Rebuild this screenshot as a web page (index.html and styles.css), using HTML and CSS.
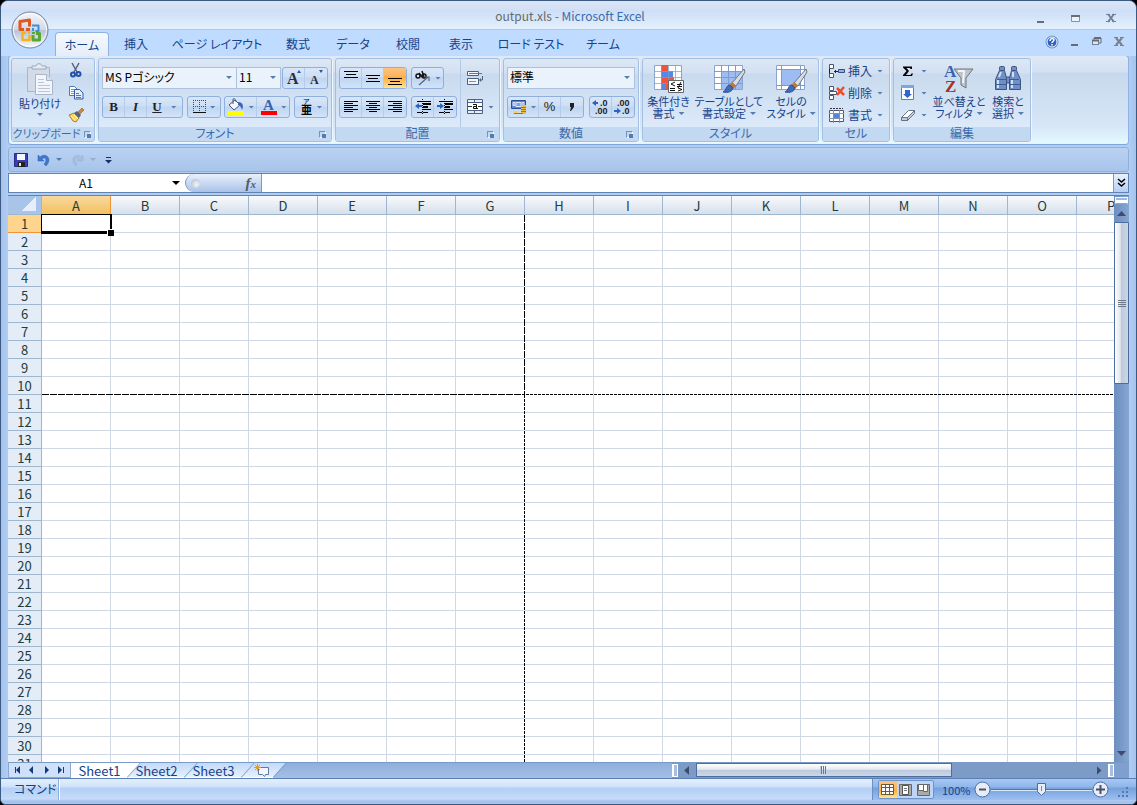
FILE: index.html
```html
<!DOCTYPE html>
<html lang="ja">
<head>
<meta charset="utf-8">
<title>output.xls - Microsoft Excel</title>
<link rel="stylesheet" href="styles.css">
</head>
<body>
<div class="window">
  <header class="top">
    <button class="office" aria-label="Office">
      <svg width="38" height="38" viewBox="0 0 38 38">
        <defs>
          <linearGradient id="orb" x1="0" y1="0" x2="0" y2="1"><stop offset="0" stop-color="#f4f6fa"/><stop offset=".48" stop-color="#d3dae6"/><stop offset=".52" stop-color="#b8c3d6"/><stop offset="1" stop-color="#f8fcff"/></linearGradient>
        </defs>
        <circle cx="19" cy="19" r="18" fill="url(#orb)" stroke="#7485a0"/>
        <circle cx="19" cy="19" r="16.5" fill="none" stroke="#fff" stroke-opacity=".8"/>
        <g fill="none" stroke-linejoin="round">
          <path d="M13 18.500H9V10.500L18.500 9v6.500" stroke="#e2571b" stroke-width="3"/>
          <path d="M21 14.500h6.500v5.500h-3" stroke="#3f8fd8" stroke-width="2"/>
          <path d="M15 22h-3.500v7h7v-5" stroke="#f5b21c" stroke-width="2.500"/>
          <path d="M22 24v5h6.500v-6.500H25" stroke="#5aa632" stroke-width="3"/>
        </g>
        <path d="M15 17h4v3h-4z" fill="#e2571b"/><path d="M21 17h2v3h-2z" fill="#3f8fd8"/><path d="M17 21h2v2h-2z" fill="#f5b21c"/><path d="M21 21h3v2h-3z" fill="#5aa632"/>
      </svg>
    </button>
    <div class="titlebar">
      <h1 class="caption"><span class="doc">output.xls</span> - Microsoft Excel</h1>
      <div class="winbtns">
        <button aria-label="最小化"><svg width="12" height="12"><rect x="2" y="9" width="7" height="2" fill="#6b6b76"/></svg></button>
        <button aria-label="最大化"><svg width="12" height="12"><path d="M1.500 4v5.500h8V4" fill="#eaf2fc" stroke="#7b93b8"/><rect x="1" y="3" width="9" height="2" fill="#6b6b76"/></svg></button>
        <button aria-label="閉じる"><svg width="12" height="12"><path d="M3 2l6 8M9 2l-6 8" stroke="#71809c" stroke-width="2"/><path d="M1 2.500h4M7 2.500h4M1 9.500h4M7 9.500h4" stroke="#71809c"/></svg></button>
      </div>
    </div>
    <nav class="tabs">
      <button class="tab t54 on">ホーム</button>
      <button class="tab t54">挿入</button>
      <button class="tab t108">ページ レイアウト</button>
      <button class="tab t54">数式</button>
      <button class="tab t56">データ</button>
      <button class="tab t54">校閲</button>
      <button class="tab t52">表示</button>
      <button class="tab t88">ロード テスト</button>
      <button class="tab t56">チーム</button>
      <div class="docbtns">
        <button aria-label="ヘルプ"><svg width="14" height="14"><circle cx="7" cy="7" r="6" fill="#2c62c8" stroke="#6f93c9"/><circle cx="7" cy="7" r="5" fill="none" stroke="#fff"/><path d="M5 6c0-3 4-3 4-1 0 1.500-2 1.500-2 3M7 9v1.500" stroke="#fff" stroke-width="1.500" fill="none"/></svg></button>
        <button aria-label="ブックを最小化"><svg width="12" height="12"><rect x="2" y="8" width="7" height="2" fill="#6b6b76"/></svg></button>
        <button aria-label="元に戻す (縮小)"><svg width="12" height="12"><path d="M3 3.500V2h7v5H8" fill="none" stroke="#6b6b76"/><rect x="1.500" y="4.500" width="6" height="4" fill="#dce9fa" stroke="#6f7f9c"/><path d="M1 4.500h7M3 2h7" stroke="#6b6b76" stroke-width="2"/></svg></button>
        <button aria-label="ブックを閉じる"><svg width="12" height="12"><path d="M3 2l6 7M9 2l-6 7" stroke="#7a7f8c" stroke-width="2"/><path d="M1 1.500h4M7 1.500h4M1 9.500h4M7 9.500h4" stroke="#7a7f8c"/></svg></button>
      </div>
    </nav>
  </header>

  <main class="body">
    <section class="ribbon">
      <div class="group g-clip">
        <div class="content clip">
          <button class="big paste"><svg width="32" height="32" viewBox="0 0 32 32"><path d="M3.500 4.500h22v24h-22z" fill="#d3dbe8" stroke="#a9b6ca"/><path d="M8 6V3h4c0-3 6-3 6 0h4v3z" fill="#e6ebf3" stroke="#9aa8be"/><path d="M11.500 11.500h11l6 6v14h-17z" fill="#f2f6fc" stroke="#a9b6ca"/><path d="M22.500 11.500v6h6" fill="#d9e2ef" stroke="#a9b6ca"/><path d="M14 16.500h6M14 19.500h6M14 22.500h12M14 25.500h12M14 28.500h12" stroke="#b9c6da"/></svg><span>貼り付け</span><i class="caret"></i></button>
          <div class="stack">
            <button aria-label="切り取り"><svg width="16" height="16"><path d="M4 0l5 9M11 0L6 9" stroke="#54647e" stroke-width="1.500"/><circle cx="5" cy="11.500" r="2" fill="none" stroke="#2350a8" stroke-width="2"/><circle cx="10.500" cy="11" r="2" fill="none" stroke="#2350a8" stroke-width="2"/></svg></button>
            <button aria-label="コピー"><svg width="16" height="16"><path d="M1.500 1.500h5l3 3v6h-8z" fill="#fff" stroke="#4d7ac0"/><path d="M3 4.500h3M3 6.500h3M3 8.500h3" stroke="#6f98d8"/><path d="M6.500 4.500h5l3.500 3.500v6h-8.500z" fill="#e4eefb" stroke="#2f5da8"/><path d="M8 8.500h3M8 10.500h5M8 12.500h5" stroke="#4d7ac0"/></svg></button>
            <button aria-label="書式のコピー/貼り付け"><svg width="16" height="16"><path d="M1 8l5-2 5 5-3 4-3-1z" fill="#f5d66b" stroke="#a98324"/><path d="M3 9l4 4M6 8l4 4" stroke="#fff3b8"/><path d="M6 6l3-2 4 4-2 3z" fill="#53628a"/><path d="M10 5l4-4 2 2-4 4z" fill="#c98a3a" stroke="#8a5a1e" stroke-width=".6"/></svg></button>
          </div>
        </div>
        <h2>クリップボード<i class="dlg"></i></h2>
      </div>

      <div class="group g-font">
        <div class="content rows">
          <div class="row">
            <div class="joined">
              <label class="combo w134"><select aria-label="フォント"><option>MS Pゴシック</option></select><i class="caret"></i></label>
              <label class="combo w44"><select aria-label="フォント サイズ"><option>11</option></select><i class="caret"></i></label>
            </div>
            <div class="seg">
              <button aria-label="フォント サイズの拡大" class="w22"><svg width="18" height="18"><text x="2" y="15" class="serif" font-size="16">A</text><path d="M12 4l2-3 2 3z" fill="#2c559c"/></svg></button>
              <button aria-label="フォント サイズの縮小" class="w22"><svg width="18" height="18"><text x="3" y="15" class="serif" font-size="12">A</text><path d="M12 1l2 3 2-3z" fill="#2c559c"/></svg></button>
            </div>
          </div>
          <div class="row">
            <div class="seg"><button class="w22 fmt"><b>B</b></button><button class="w22 fmt"><em>I</em></button><button class="w36 fmt"><u>U</u><i class="caret"></i></button></div>
            <div class="seg"><button class="w34" aria-label="罫線"><svg width="15" height="16"><path d="M1 1.500h13M1 7.500h13M1.500 1v12M7.500 1v12M13.500 1v12" stroke="#444a5c" stroke-dasharray="1 1"/><path d="M1 13.500h13" stroke="#111"/></svg><i class="caret"></i></button></div>
            <div class="seg"><button class="w34" aria-label="塗りつぶしの色"><svg width="18" height="18"><path d="M2 7l6-5 5 5-6 5z" fill="#f3f6fb" stroke="#4b5a74"/><path d="M6 6V1c2-1 3 1 3 3" fill="none" stroke="#4b5a74"/><path d="M11 4c5 0 6 4 4 8-1-3-2-5-4-5z" fill="#3a68b8"/><rect x="1" y="13" width="16" height="4" fill="#ff0"/></svg><i class="caret"></i></button><button class="w34" aria-label="フォントの色"><svg width="18" height="18"><text x="3" y="12" class="serif blue" font-size="15">A</text><rect x="1" y="13" width="16" height="4" fill="red"/></svg><i class="caret"></i></button></div>
            <div class="seg"><button class="w34" aria-label="ふりがなの表示/非表示"><svg width="14" height="18" class="ruby"><text x="4" y="6" font-size="7">ア</text><text x="2" y="16" font-size="11" font-weight="700">亜</text></svg><i class="caret"></i></button></div>
          </div>
        </div>
        <h2>フォント<i class="dlg"></i></h2>
      </div>

      <div class="group g-align">
        <div class="content align">
          <div class="rows">
            <div class="row">
              <div class="seg">
                <button class="w23" aria-label="上揃え"><svg width="16" height="16"><path d="M1 1.500h14M3 4.500h10M1 7.500h14" stroke="#000"/></svg></button>
                <button class="w23" aria-label="上下中央揃え"><svg width="16" height="16"><path d="M1 5.500h14M3 8.500h10M1 11.500h14" stroke="#000"/></svg></button>
                <button class="w23 lit" aria-label="下揃え"><svg width="16" height="16"><path d="M1 8.500h14M3 11.500h10M1 14.500h14" stroke="#000"/></svg></button>
              </div>
              <div class="seg"><button class="w32" aria-label="方向"><svg width="18" height="16"><g fill="none" stroke="#111" stroke-width="1.500"><circle cx="4" cy="6" r="2"/><path d="M5 3l3 4M8 1l2 6"/><circle cx="10" cy="6" r="2"/></g><path d="M5 15l9-8M11 7h4v4" fill="none" stroke="#5a6474" stroke-width="1.200"/></svg><i class="caret"></i></button></div>
            </div>
            <div class="row">
              <div class="seg">
                <button class="w23" aria-label="左揃え"><svg width="16" height="16"><path d="M1 2.500h14M1 4.500h9M1 6.500h14M1 8.500h9M1 10.500h14M1 12.500h9" stroke="#000"/></svg></button>
                <button class="w23" aria-label="中央揃え"><svg width="16" height="16"><path d="M1 2.500h14M4 4.500h8M1 6.500h14M4 8.500h8M1 10.500h14M4 12.500h8" stroke="#000"/></svg></button>
                <button class="w23" aria-label="右揃え"><svg width="16" height="16"><path d="M1 2.500h14M6 4.500h9M1 6.500h14M6 8.500h9M1 10.500h14M6 12.500h9" stroke="#000"/></svg></button>
              </div>
              <div class="seg">
                <button class="w22" aria-label="インデントを減らす"><svg width="16" height="16"><path d="M2 2.500h14M8 10.500h8M2 13.500h5M8 13.500h5" stroke="#000"/><path d="M8 5h8M8 8h5" stroke="#000" stroke-width="2"/><path d="M0 7l4-3v2h3v2H4v2z" fill="#2d63c4"/><path d="M7.500 0v16" stroke="#000" stroke-dasharray="1 1"/></svg></button>
                <button class="w22" aria-label="インデントを増やす"><svg width="16" height="16"><path d="M2 2.500h14M8 10.500h8M2 13.500h5M8 13.500h5" stroke="#000"/><path d="M8 5h8M8 8h5" stroke="#000" stroke-width="2"/><path d="M7 7L3 4v2H0v2h3v2z" fill="#2d63c4"/><path d="M7.500 0v16" stroke="#000" stroke-dasharray="1 1"/></svg></button>
              </div>
            </div>
          </div>
          <div class="rows side">
            <button class="flat" aria-label="折り返して全体を表示する"><svg width="17" height="16"><path d="M.5 1.500h11v4H.5z" fill="#f4f7fc" stroke="#4d6180"/><path d="M2 3.500h13" stroke="#a86a28"/><path d="M.5 8.500h11v6H.5z" fill="#f4f7fc" stroke="#4d6180"/><path d="M2 11.500h7" stroke="#c08048"/><path d="M15.500 6v4H13" stroke="#4d6180" fill="none"/><path d="M12 10l2-2v4z" fill="#4d6180"/></svg></button>
            <button class="flat" aria-label="セルを結合して中央揃え"><svg width="17" height="16"><path d="M.5.500h15v14H.5z" fill="#e6eef9" stroke="#4d6180"/><path d="M.5 3.500h15M.5 11.500h15M7.500 0v4M7.500 12v3" stroke="#4d6180"/><path d="M1 4h14v7H1z" fill="#fff"/><path d="M1 7.500h4M11 7.500h4" stroke="#333"/><path d="M6 5.500h3.500V10M9 7.500H6.500V9.500H11" stroke="#111" fill="none"/></svg><i class="caret"></i></button>
          </div>
        </div>
        <h2>配置<i class="dlg"></i></h2>
      </div>

      <div class="group g-num">
        <div class="content rows">
          <div class="row"><label class="combo fill"><select aria-label="表示形式"><option>標準</option></select><i class="caret"></i></label></div>
          <div class="row">
            <div class="seg"><button class="w32" aria-label="通貨表示形式"><svg width="18" height="16"><path d="M1.500 1.500h14v8h-14z" fill="#5f86cf" stroke="#2a4f96"/><path d="M6 3.500h5v4H6zM3 3.500h2v3H3zM12 3.500h2v3h-2z" fill="#7fa3e0" stroke="#dbe7fa"/><path d="M11 6h5v9h-5z" fill="#f0bd3e"/><path d="M3 12h6v3H3z" fill="#f6d169"/><path d="M11 8.500h5M11 10.500h5M11 12.500h5M4 14.500h9" stroke="#a7731b"/></svg><i class="caret"></i></button><button class="w23 sans">%</button><button class="w23 comma" aria-label="桁区切りスタイル"><svg width="8" height="10"><path d="M2 1h4v4L3 9H2l1-4H2z" fill="#222"/></svg></button></div>
            <div class="seg"><button class="w22" aria-label="小数点以下の表示桁数を増やす"><svg width="18" height="16" class="dec"><text x="8" y="7">.0</text><text x="3" y="15">.00</text><path d="M0 4l4-3v2h2v2H4v2z" fill="#2d63c4"/></svg></button><button class="w22" aria-label="小数点以下の表示桁数を減らす"><svg width="18" height="16" class="dec"><text x="3" y="7">.00</text><text x="8" y="15">.0</text><path d="M7 12L3 9v2H0v2h3v2z" fill="#2d63c4"/></svg></button></div>
          </div>
        </div>
        <h2>数値<i class="dlg"></i></h2>
      </div>

      <div class="group g-style">
        <div class="content">
          <button class="big w50"><svg width="32" height="32" viewBox="0 0 32 32"><path d="M1.500 2.500h27v24h-27z" fill="#fff" stroke="#8ba6cd"/><path d="M8 2h7v25H8z" fill="#f0533c"/><path d="M8 8h12v6H8z" fill="#5688e6"/><path d="M15 14h6v7h-6z" fill="#f0533c"/><path d="M8 21h5v5H8z" fill="#5688e6"/><path d="M1 8.500h28M1 14.500h28M1 20.500h28M8.500 2v25M15.500 2v25M22.500 2v25" stroke="#7d9ccc" stroke-opacity=".7"/><path d="M15.500 17.500h15v12h-15z" fill="#fff" stroke="#666"/><path d="M22 19l-4 2 4 2M24 21.500h5M24 23.500h5M17 25.500h5M17 27.500h5M28 19l-3 6M25 25l4 1.500-4 1.500" fill="none" stroke="#111"/></svg><span>条件付き<br>書式<i class="caret"></i></span></button>
          <button class="big w70"><svg width="32" height="32" viewBox="0 0 32 32"><path d="M1.500 2.500h28v24h-28z" fill="#fff" stroke="#8ba6cd"/><path d="M8 8h21v18H8z" fill="#9dbdf2"/><path d="M1 8.500h29M1 14.500h29M1 20.500h29M8.500 2v25M15.500 2v25M22.500 2v25" stroke="#7d9ccc"/><path d="M31 6L19 20l4 3 9-14z" fill="#d9dce2" stroke="#6c7482"/><path d="M19 19l4 4-3 3-4-3z" fill="#b77a38"/><path d="M17 22c-4 0-3 5-7 7 5 1 9 0 10-4z" fill="#3f6cb8" stroke="#2a4f91"/></svg><span>テーブルとして<br>書式設定<i class="caret"></i></span></button>
          <button class="big w54"><svg width="32" height="32" viewBox="0 0 32 32"><path d="M1.500 2.500h28v24h-28z" fill="#fff" stroke="#8ba6cd"/><path d="M6 7h19v15H6z" fill="#9dbdf2"/><path d="M1 6.500h29M1 22.500h29M6.500 2v25M25.500 2v25" stroke="#7d9ccc"/><path d="M31 6L19 20l4 3 9-14z" fill="#d9dce2" stroke="#6c7482"/><path d="M19 19l4 4-3 3-4-3z" fill="#b77a38"/><path d="M17 22c-4 0-3 5-7 7 5 1 9 0 10-4z" fill="#3f6cb8" stroke="#2a4f91"/></svg><span>セルの<br>スタイル<i class="caret"></i></span></button>
        </div>
        <h2>スタイル</h2>
      </div>

      <div class="group g-cell">
        <div class="content stack wide">
          <button><svg width="17" height="16"><path d="M1.500 1.500h4v4h-4zM1.500 10.500h4v4h-4z" fill="#fff" stroke="#4a5670"/><path d="M1.500 5.500v5M6 8.500h4M7.500 7v3" stroke="#222"/><path d="M10.500 6.500h6v3h-6z" fill="#8fb0e8" stroke="#34507f"/></svg>挿入<i class="caret"></i></button>
          <button><svg width="17" height="16"><path d="M1.500 1.500h4v4h-4zM1.500 10.500h4v4h-4zM1.500 6.500h7v3h-7z" fill="#fff" stroke="#4a5670"/><path d="M9 3l7 7M16 2L9 10" stroke="#ee4a2c" stroke-width="2.500"/></svg>削除<i class="caret"></i></button>
          <button><svg width="17" height="16"><path d="M1.500 3.500h14v11h-14z" fill="#fff" stroke="#4a5670"/><path d="M1 6.500h15M1 11.500h15M5.500 3v13M11.500 3v13" stroke="#8594ae"/><path d="M6 7h5v4H6z" fill="#4f86e0"/><path d="M2 1.500h13" stroke="#333" stroke-dasharray="2 1"/></svg>書式<i class="caret"></i></button>
        </div>
        <h2>セル</h2>
      </div>

      <div class="group g-edit">
        <div class="content">
          <div class="stack wide">
            <button aria-label="合計"><svg width="16" height="16"><path d="M3 3.500h9v2.500h-1.500L10 5H6.500L9 8l-3 4h4.500l1-1.500H13L12 13H3v-1l3.500-4L3 4.500z" fill="#000"/></svg><i class="caret"></i></button>
            <button aria-label="フィル"><svg width="16" height="16"><path d="M1.500.500h12v14h-12z" fill="#fff" stroke="#5b7fb8"/><path d="M1 0h13v3H1z" fill="#7fa5e0"/><path d="M5 5h5v4h2l-4.500 4L3 9h2z" fill="#2f66cc"/></svg><i class="caret"></i></button>
            <button aria-label="クリア"><svg width="16" height="16"><path d="M1.500 10.500l7-7h6l-7 7z" fill="#fff" stroke="#6a7384"/><path d="M1.500 10.500h6v3h-6zM7.500 10.500l7-7v3l-7 7z" fill="#c3cddd" stroke="#6a7384"/></svg><i class="caret"></i></button>
          </div>
          <button class="big w56"><svg width="32" height="32" viewBox="0 0 32 32"><text x="1" y="14" class="serif blue" font-size="17">A</text><text x="2" y="29" class="serif red" font-size="17">Z</text><path d="M11 6h19L23 15v10l-5-3v-7z" fill="#bfc3ca" stroke="#6e7480"/><path d="M15 8h6l-1 12" fill="none" stroke="#f2f4f7" stroke-width="2"/></svg><span>並べ替えと<br>フィルタ<i class="caret"></i></span></button>
          <button class="big w42"><svg width="32" height="32" viewBox="0 0 32 32"><g fill="#6f90c6" stroke="#3c5684"><path d="M13 14h6v6h-6z"/><path d="M7.500 7.500h5l2 8v11h-11v-10zM24.500 7.500h-5l-2 8v11h11v-10z"/><rect x="7.500" y="3.500" width="5" height="4" rx="1"/><rect x="19.500" y="3.500" width="5" height="4" rx="1"/></g><path d="M6 17v8M20 17v8M9 9l-2 5M21 9v5" stroke="#cfdff5" stroke-width="2"/><path d="M4 21.500h10M18 21.500h10M5 16.500h9M18 16.500h9" stroke="#3f5d92"/></svg><span>検索と<br>選択<i class="caret"></i></span></button>
        </div>
        <h2>編集</h2>
      </div>
    </section>

    <section class="qat">
      <button aria-label="上書き保存"><svg width="14" height="14"><path d="M.5.500h13v13H.5z" fill="#3c3fb4" stroke="#2a2a88"/><path d="M3 1h8v6H3z" fill="#f2f6ff"/><path d="M4 9h7v5H4z" fill="#222"/><path d="M5 10h2v3H5z" fill="#dfe6f4"/></svg></button>
      <button aria-label="元に戻す"><svg width="14" height="14"><path d="M1 2v6h6L5 6c3-3 6 1 2 5l2 2C16 6 9-1 3 4z" fill="#3e78d0" stroke="#2e5fb0" stroke-width=".5"/></svg><i class="caret"></i></button>
      <button class="off" aria-label="やり直し"><svg width="14" height="14"><path d="M12 2v6H6l2-2C5 3 2 7 6 11l-1 2C-2 7 4-1 10 4z" fill="#a9bcd8" stroke="#8fa6c8" stroke-width=".5"/></svg><i class="caret"></i></button>
      <button aria-label="クイック アクセス ツール バーのカスタマイズ"><svg width="7" height="8"><path d="M1 1.500h5" stroke="#14306c"/><path d="M0 4h7L3.500 7.500z" fill="#14306c"/></svg></button>
    </section>

    <section class="fbar">
      <label class="namebox"><input aria-label="名前ボックス" value="A1"><i class="caret dark"></i></label>
      <div class="fx"><span class="knob"></span><button class="fxbtn" aria-label="関数の挿入"><em>f<small>x</small></em></button></div>
      <input class="formula" aria-label="数式バー">
      <button class="expand" aria-label="数式バーの展開"><svg width="9" height="10"><path d="M1 1l3.500 3L8 1M1 5l3.500 3L8 5" fill="none" stroke="#000" stroke-width="1.500"/></svg></button>
    </section>

    <section class="sheet">
      <div class="gridwrap">
        <table class="grid" id="grid"></table>
        <div class="cursor"></div>
        <div class="break-h"></div>
        <div class="break-v"></div>
      </div>
      <div class="vscroll">
        <span class="split"></span>
        <button aria-label="上へ"><i class="tri up"></i></button>
        <div class="vtrack"><div class="vthumb"><i class="grip"></i></div></div>
        <button aria-label="下へ"><i class="tri down"></i></button>
      </div>
    </section>

    <section class="bottom">
      <div class="sheettabs">
        <div class="nav">
          <button aria-label="先頭"><svg width="8" height="8"><path d="M1.500 1v6" stroke="#123a80"/><path d="M6 0v8L2 4z" fill="#123a80"/></svg></button>
          <button aria-label="前"><svg width="8" height="8"><path d="M5 0v8L1 4z" fill="#123a80"/></svg></button>
          <button aria-label="次"><svg width="8" height="8"><path d="M2 0v8l4-4z" fill="#123a80"/></svg></button>
          <button aria-label="末尾"><svg width="8" height="8"><path d="M1 0v8l4-4z" fill="#123a80"/><path d="M6.500 1v6" stroke="#123a80"/></svg></button>
        </div>
        <div class="tabset">
          <button class="st s1">Sheet1</button>
          <button class="st s2">Sheet2</button>
          <button class="st s3">Sheet3</button>
          <button class="st s4" aria-label="ワークシートの挿入"><svg width="16" height="13"><path d="M4.500 3.500h10v7h-3l-1 2-2-2h-4z" fill="#f3f6fc" stroke="#62799f"/><path d="M3.500 0v7M0 3.500h7M1 1l5 5M6 1L1 6" stroke="#e39a2c"/></svg></button>
        </div>
      </div>
      <div class="hscroll">
        <span class="hsplit"></span>
        <button aria-label="左へ"><i class="tri left"></i></button>
        <div class="htrack"><div class="hthumb"><i class="grip side"></i></div></div>
        <button aria-label="右へ"><i class="tri right"></i></button>
        <span class="hsplit"></span>
      </div>
      <div class="corner"></div>
    </section>
  </main>

  <footer class="status">
    <span class="mode">コマンド</span>
    <div class="zoombar">
      <div class="views">
        <button class="lit" aria-label="標準"><svg width="14" height="12"><path d="M.5.500h12v10H.5z" fill="#fff" stroke="#6b5a30"/><path d="M0 3.500h13M0 7.500h13M4.500 0v11M8.500 0v11" stroke="#6b5a30"/></svg></button>
        <button aria-label="ページ レイアウト"><svg width="14" height="12"><path d="M.5.500h12v11H.5z" fill="#aaa" stroke="#666"/><path d="M3.500 1.500h6v9h-6z" fill="#fff" stroke="#555"/><path d="M5 4.500h3M5 6.500h3" stroke="#777"/></svg></button>
        <button aria-label="改ページ プレビュー"><svg width="14" height="12"><path d="M.5.500h12v11H.5z" fill="#aaa" stroke="#666"/><path d="M1.500.500h5v6h-5zM6.500.500h4v7h-4z" fill="#fff" stroke="#666"/></svg></button>
      </div>
      <span class="pct">100%</span>
      <button class="round" aria-label="縮小"><svg width="17" height="17"><circle cx="8.500" cy="8.500" r="7.500" fill="#e6edf8" stroke="#4f6c9e"/><path d="M5 8.500h7" stroke="#47536b" stroke-width="2"/></svg></button>
      <input class="zoom" type="range" min="0" max="200" value="100" aria-label="ズーム">
      <button class="round" aria-label="拡大"><svg width="17" height="17"><circle cx="8.500" cy="8.500" r="7.500" fill="#e6edf8" stroke="#4f6c9e"/><path d="M4 8.500h9M8.500 4v9" stroke="#47536b" stroke-width="2"/></svg></button>
      <svg class="sizer" width="12" height="12"><path d="M8 0h2v2H8zM4 4h2v2H4zM8 4h2v2H8zM0 8h2v2H0zM4 8h2v2H4zM8 8h2v2H8z" fill="#5677b0"/></svg>
    </div>
  </footer>
</div>
<script src="script.js"></script>
</body>
</html>
```
FILE: script.js
```js
const columns = "ABCDEFGHIJKLMNOP".split("");
const rowCount = 31;
const grid = document.getElementById("grid");

const head = grid.createTHead().insertRow();
const corner = document.createElement("th");
corner.className = "all";
head.append(corner);
for (const name of columns) {
  const th = document.createElement("th");
  th.scope = "col";
  th.textContent = name;
  if (name === "A") th.className = "sel";
  head.append(th);
}

const body = grid.createTBody();
for (let r = 1; r <= rowCount; r++) {
  const row = body.insertRow();
  const th = document.createElement("th");
  th.scope = "row";
  th.textContent = r;
  if (r === 1) th.className = "sel";
  row.append(th);
  for (let c = 0; c < columns.length; c++) row.insertCell();
}
```
FILE: styles.css
```css
* { box-sizing: border-box; }
html, body { height: 100%; }
body {
  margin: 0;
  background: #000;
  font: 12px/14px "Noto Sans CJK JP", sans-serif;
  font-feature-settings: "palt";
  color: #15428b;
  overflow: hidden;
}
button, input, select { font: inherit; font-feature-settings: inherit; color: inherit; }
button { margin: 0; padding: 0; border: 0; background: none; display: flex; align-items: center; justify-content: center; white-space: nowrap; }
h1, h2 { margin: 0; font: inherit; }
svg { display: block; flex: none; overflow: visible; }

.window {
  height: 100vh;
  display: flex;
  flex-direction: column;
  border: 1px solid #3b5a82;
  border-radius: 8px 8px 6px 6px;
  background: #b0cbf1;
  overflow: hidden;
}

/* title and tabs */
.top { position: relative; flex: none; }
.office { position: absolute; left: 10px; top: 10px; z-index: 2; border-radius: 50%; }
.titlebar {
  height: 29px;
  display: flex;
  align-items: center;
  border-bottom: 1px solid #a9c9f2;
  background: linear-gradient(#dbe5f8 0, #d5e0f5 8px, #cbdff7 9px, #e4effd 28px);
}
.caption { flex: 1; text-align: center; color: #3e6aaa; padding: 2px 0 0 104px; }
.doc { color: #696969; }
.winbtns { display: flex; gap: 23px; padding-right: 19px; padding-top: 6px; }
.tabs { display: flex; height: 26px; padding: 2px 4px 0 54px; background: #bfdbff; }
.tab { height: 24px; }
.tab.on { border: 1px solid #8db2e3; border-bottom: 0; border-radius: 4px 4px 0 0; background: linear-gradient(#f6faff, #e4edf8); }
.t52 { width: 52px; } .t54 { width: 54px; } .t56 { width: 56px; } .t88 { width: 88px; } .t108 { width: 108px; }
.docbtns { display: flex; margin-left: auto; gap: 10px; padding-right: 7px; align-items: center; height: 20px; }

.body { flex: 1; min-height: 0; display: flex; flex-direction: column; padding: 0 7px; background: linear-gradient(90deg, #a5c3ee 0, #b2cdf2 7px, #b2cdf2 calc(100% - 7px), #a5c3ee 100%); }

/* ribbon */
.ribbon {
  flex: none;
  display: flex;
  gap: 3px;
  margin-top: -1px;
  padding: 2px;
  border: 1px solid #8db2e3;
  border-bottom-color: #7ea6d6;
  border-radius: 4px;
  background: linear-gradient(#dfe9f6 0, #d3e1f2 16px, #c8d9ed 17px, #d6e6f7 70px, #e2f8ff 86px);
}
.group {
  flex: none;
  height: 84px;
  display: flex;
  flex-direction: column;
  border: 1px solid #a3c0e2;
  border-radius: 3px;
  box-shadow: 1px 1px 0 #edf5fd;
  background: linear-gradient(#dde8f5 0, #d3e0f2 14px, #c9daee 15px, #dceafa 68px);
  overflow: hidden;
}
.g-clip { width: 84px; } .g-font { width: 234px; } .g-align { width: 165px; } .g-num { width: 136px; }
.g-style { width: 177px; } .g-cell { width: 68px; } .g-edit { width: 138px; }
.content { flex: 1; display: flex; min-height: 0; }
.group h2 { position: relative; height: 14px; flex: none; text-align: center; background: #c2d9f1; color: #3e6aaa; line-height: 12px; }
.group.g-clip h2 { padding-right: 13px; font-size: 11px; }
.dlg { position: absolute; right: 5px; top: 4px; width: 7px; height: 7px; border: 1px solid #7393bd; border-right-color: #fff; border-bottom-color: #fff; }
.g-clip .dlg { right: 3px; }
.dlg::after { content: ""; position: absolute; right: -1px; bottom: -1px; width: 4px; height: 4px; background: #587bab; }
.caret { display: inline-block; flex: none; width: 6px; height: 3px; background: #567db1; clip-path: polygon(0 0, 100% 0, 50% 100%); }
.rows { display: flex; flex-direction: column; gap: 7px; padding: 8px 3px 0; }
.row { display: flex; justify-content: space-between; height: 22px; }
.joined { display: flex; }
.combo { position: relative; display: flex; height: 22px; border: 1px solid #abc1de; background: #eaf2fb; }
.combo + .combo { border-left: 0; }
.combo select { width: 100%; border: 0; padding: 0 2px 2px; background: none; appearance: none; color: #000; }
.combo .caret { position: absolute; right: 4px; top: 8px; }
.fill { flex: 1; }
.w134 { width: 135px; } .w44 { width: 44px; }
.seg { display: flex; border: 1px solid #8fb0dd; border-radius: 3px; background: linear-gradient(#d9e6f7 0, #cddff5 9px, #bfd5f1 10px, #d2e3f8 100%); }
.seg button { gap: 3px; border-right: 1px solid #b5cbe9; }
.seg button:last-child { border-right: 0; }
.w22 { width: 22px; } .w23 { width: 22px; } .w32 { width: 31px; } .w34 { width: 32px; } .w36 { width: 35px; }
.w50 { width: 51px; } .w54 { width: 54px; } .w70 { width: 70px; } .w56 { width: 58px; } .w42 { width: 40px; }
.lit { background: linear-gradient(#fbc384 0, #fdb35d 8px, #ffa93c 9px, #ffe58e 100%); }
.fmt { font: bold 13px/16px "Liberation Serif", serif; color: #222; }
.fmt .caret { margin-left: 6px; }
.serif { font-family: "Liberation Serif", serif; font-weight: bold; fill: #2b2f38; }
.blue { fill: #3a63ae; }
.red { fill: #a43428; }
.ruby { fill: #000; }
.sans { font-family: "Liberation Sans", sans-serif; font-size: 13px; color: #222; }
.dec { font: bold 9px "Liberation Sans", sans-serif; fill: #222; }
.align { justify-content: space-between; }
.align .row { gap: 4px; justify-content: flex-start; }
.side { width: 39px; padding-left: 6px; border-left: 1px solid #b3c9e6; }
.flat { height: 22px; gap: 4px; justify-content: flex-start; }

.big { flex-direction: column; justify-content: flex-start; padding-top: 4px; line-height: 12px; font-size: 11px; }
.big .caret { margin: 0 0 3px 4px; }
.g-style .content { justify-content: center; }
.paste { width: 56px; }
.paste span { padding-top: 2px; }
.big.paste .caret { margin: 4px 0 0; }
.stack { display: flex; flex-direction: column; padding-top: 1px; }
.stack button { height: 22px; gap: 3px; justify-content: flex-start; }
.g-cell .stack { padding-left: 5px; }
.g-cell .stack .caret { margin-left: 2px; }
.g-edit .stack { width: 36px; padding-left: 6px; }
.g-edit .stack button { gap: 5px; }

/* quick access */
.qat { flex: none; display: flex; align-items: center; gap: 9px; height: 25px; margin: 2px 0 1px; padding: 0 5px; border: 1px solid #8fb0dd; border-radius: 3px; background: linear-gradient(#b9d2f2, #a7c4ea); }
.qat button { gap: 5px; }
.off { opacity: .8; }
.off .caret { background: #93a6c2; }

/* formula bar */
.fbar { flex: none; display: flex; height: 20px; border: 1px solid #5f84b4; background: #fff; }
.namebox { position: relative; width: 176px; display: flex; }
.namebox input { width: 100%; padding: 0 22px 0 0; border: 0; text-align: center; background: #fff; color: #000; }
.dark { position: absolute; right: 5px; top: 7px; width: 8px; height: 4px; background: #000; }
.fx { width: 77px; display: flex; align-items: center; justify-content: space-between; padding: 0 5px; border: 1px solid #7a9ac6; border-width: 0 1px; border-radius: 9px 0 0 9px; background: linear-gradient(#e8f0fb, #a9c3e8); }
.knob { width: 9px; height: 9px; border-radius: 50%; background: radial-gradient(circle at 60% 60%, #f3f6fa, #a9b6cb); }
.fxbtn { font: bold 15px/16px "Liberation Serif", serif; color: #555b66; }
.fxbtn small { font-size: 11px; }
.formula { flex: 1; min-width: 0; border: 0; padding: 0 4px; background: #fff; }
.expand { width: 15px; border-left: 1px solid #7a9ac6; background: linear-gradient(#e8f1fd, #b4cff3); }

/* grid */
.sheet { flex: 1; min-height: 0; display: flex; margin-top: 2px; border-top: 1px solid #5f84b4; }
.gridwrap { position: relative; flex: 1; min-width: 0; overflow: hidden; background: #fff; }
.grid { width: 1138px; table-layout: fixed; border-spacing: 0; font: 13px/16px "Noto Sans CJK JP", sans-serif; color: #223c3c; }
.grid th, .grid td { height: 18px; padding: 0; font-weight: 400; border: 0 solid #d0d7e5; border-width: 0 1px 1px 0; }
.grid th { border-color: #9eb6ce; line-height: 17px; }
.grid thead th { background: linear-gradient(#f8fafd, #d7dfeb); height: 19px; }
.grid tbody th { background: #e4ecf7; }
.grid th.all { width: 34px; background: linear-gradient(135deg, transparent 66%, #e4eefc 67%) 0 0 / 28px 15px no-repeat, #a9c4e9; }
.grid thead th.sel { background: linear-gradient(#f9d99f, #f1c15f); border-color: #f29536; }
.grid tbody th.sel { background: #ffd58d; border-color: #f29536; }
.cursor { position: absolute; left: 33px; top: 18px; width: 71px; height: 20px; border: 2px solid #000; border-width: 1px 2px 3px 1px; }
.cursor::after { content: ""; position: absolute; right: -4px; bottom: -5px; width: 6px; height: 6px; border: solid #fff; border-width: 1px 0 0 1px; background: #000; }
.break-h { position: absolute; left: 34px; right: 0; top: 198px; height: 1px; background: repeating-linear-gradient(90deg, #000 0 7px, #fff 7px 8px) 0 0 / 482px 1px no-repeat, repeating-linear-gradient(90deg, #000 0 3px, #fff 3px 4px); }
.break-v { position: absolute; left: 516px; top: 19px; bottom: 0; width: 1px; background: repeating-linear-gradient(#000 0 7px, #fff 7px 8px) 0 0 / 1px 180px no-repeat, repeating-linear-gradient(#000 0 3px, #fff 3px 4px); }

/* scroll bars */
.vscroll { width: 15px; display: flex; flex-direction: column; background: linear-gradient(90deg, #6d8fbf, #86a6d2); }
.vscroll button { height: 17px; }
.split { height: 7px; margin: 1px; border: 1px solid #f4f8ff; background: #fff; border-bottom-color: #8aa7cf; box-shadow: inset 0 2px 0 #9cb9e3; }
.vtrack { flex: 1; }
.vthumb { height: 31%; display: flex; align-items: center; justify-content: center; border: 1px solid #4c6d9e; border-radius: 1px; background: linear-gradient(90deg, #fff 0, #e2e7ee 40%, #bccadd 50%, #ccd7e6 100%); }
.grip { width: 8px; height: 7px; background: repeating-linear-gradient(#6f7888 0 1px, transparent 1px 2px); }
.grip.side { width: 7px; height: 8px; background: repeating-linear-gradient(90deg, #6f7888 0 1px, transparent 1px 2px); }
.tri { width: 9px; height: 5px; background: #3e4b70; }
.up { clip-path: polygon(50% 0, 100% 100%, 0 100%); }
.down { clip-path: polygon(0 0, 100% 0, 50% 100%); }
.left, .right { width: 5px; height: 9px; }
.left { clip-path: polygon(100% 0, 100% 100%, 0 50%); }
.right { clip-path: polygon(0 0, 100% 50%, 0 100%); }

/* sheet tabs */
.bottom { flex: none; display: flex; height: 16px; border-top: 1px solid #7a9ac6; background: #8cacd8; }
.sheettabs { flex: 3; min-width: 0; display: flex; background: linear-gradient(#8fafdb, #a4bfe6); }
.nav { display: flex; width: 63px; padding: 0 5px; justify-content: space-between; border: 1px solid #8aa9d6; border-top: 0; background: #cfe1f9; }
.tabset { display: flex; overflow: hidden; padding-right: 14px; isolation: isolate; }
.st { position: relative; width: 57px; font-size: 13px; line-height: 14px; isolation: isolate; }
.st::before { content: ""; position: absolute; z-index: -1; inset: 0 -6px 0 0; background: linear-gradient(#c3daf8, #e6f0fd); border: 1px solid #fff; border-right-color: #7a9ac6; border-top: 0; transform: skewX(-42deg); }
.s1 { z-index: 4; } .s2 { z-index: 3; } .s3 { z-index: 2; } .s4 { z-index: 1; width: 32px; padding-left: 8px; }
.s1::before { background: #fff; left: -20px; }
.hscroll { flex: 2; display: flex; background: #7c9bc6; }
.hscroll button { width: 18px; }
.hsplit { width: 6px; margin: 1px 0; border: 1px solid #fff; border-left-width: 2px; background: #a4c0ea; }
.htrack { flex: 1; padding: 0 0 1px; display: flex; }
.hthumb { width: 65%; display: flex; align-items: center; justify-content: center; border: 1px solid #4c6d9e; background: linear-gradient(#fff 0, #e4e9f0 45%, #bccadd 50%, #cdd8e7 100%); }
.corner { width: 15px; background: #7f9fcf; }

/* status */
.status { flex: none; display: flex; height: 26px; padding-bottom: 4px; border-top: 1px solid #5b80b5; background: linear-gradient(#e3effd 0, #cfe2fa 8px, #b2cff5 9px, #c6dcf9 20px, #a5c3ee 22px); }
.mode { width: 58px; padding: 3px 0 0 13px; border-right: 1px solid #8fb0dd; box-shadow: 1px 0 0 #fff; }
.zoombar { margin-left: auto; display: flex; align-items: center; padding: 0 6px 0 5px; border-left: 1px solid #6b90c6; background: linear-gradient(#a8c8f5 0, #8fb5ea 8px, #76a0dc 9px, #9cc0f0 100%); }
.views { display: flex; height: 19px; border: 1px solid #6f93c7; border-radius: 2px; background: #bdd6f7; }
.views button { width: 18px; }
.pct { width: 40px; padding-left: 8px; font-size: 11px; line-height: 18px; }
.round { width: 17px; }
.zoom { width: 101px; height: 19px; margin: 0; appearance: none; background: linear-gradient(#5578ac, #5578ac) 0 9px / 100% 1px no-repeat, linear-gradient(#d7e6fb, #d7e6fb) 0 10px / 100% 1px no-repeat; }
.zoom::-webkit-slider-thumb { appearance: none; width: 11px; height: 15px; background: url("data:image/svg+xml,%3Csvg xmlns='http://www.w3.org/2000/svg' width='11' height='15'%3E%3Cpath d='M1.500 1.500h8v8l-4 4-4-4z' fill='%23e6edf8' stroke='%234f6c9e'/%3E%3Cpath d='M5.500 4v5' stroke='%236e86b0'/%3E%3C/svg%3E"); }
.sizer { margin: 6px 0 0 9px; }
```
